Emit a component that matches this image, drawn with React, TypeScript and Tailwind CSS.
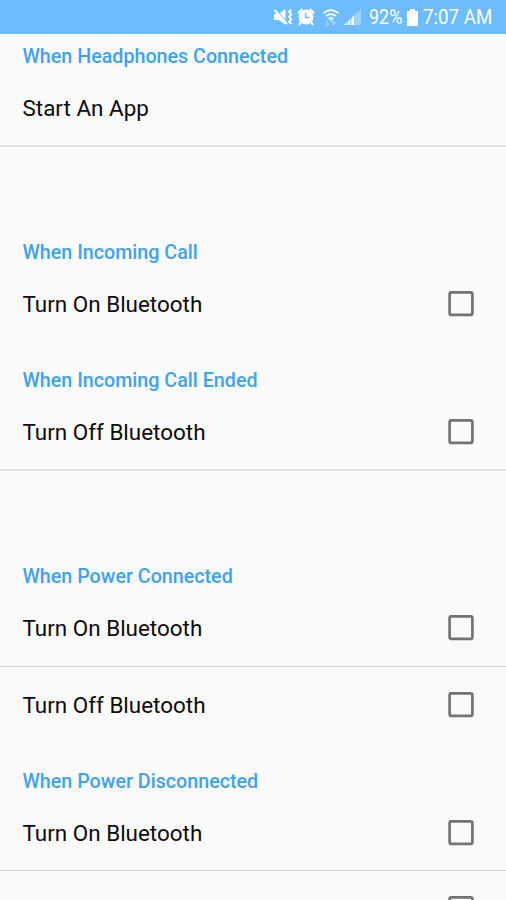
import React from "react";

function Heading({ text, className = "h-[52px]" }: { text: string; className?: string }) {
  return (
    <h2 className={`flex shrink-0 items-end pb-[2px] pl-[22.5px] text-[19.7px] leading-[23px] font-medium text-[#3fa2f0] ${className}`}>
      <span className="whitespace-nowrap">{text}</span>
    </h2>
  );
}

function Checkbox() {
  return (
    <svg className="h-[26px] w-[26px] shrink-0" viewBox="0 0 26 26" fill="none">
      <rect x="1.600" y="1.300" width="22.800" height="22.600" rx="2" stroke="#737373" strokeWidth="2.700" />
    </svg>
  );
}

function Row({ text, checkbox = true, className = "h-[76px]" }: { text?: string; checkbox?: boolean; className?: string }) {
  return (
    <div className={`flex shrink-0 items-center justify-between pr-8 pl-[22.5px] ${className}`}>
      <span className="whitespace-nowrap text-[22.45px] leading-[26px] text-[#0b0b0b]">{text}</span>
      {checkbox && <Checkbox />}
    </div>
  );
}

function MutedIcon() {
  return (
    <svg className="h-[20px] w-[20px] shrink-0" viewBox="0 0 20 20" fill="white">
      <path d="M1 7h4.500L12.500 2v15.500L5.500 13H1z" />
      <path d="M3 2.500L14.500 15" stroke="#6dbcff" strokeWidth="1" />
      <path d="M1.500 3L14 17" stroke="white" strokeWidth="1.900" />
      <path d="M18.200 2.500l-2 2.300 2 2.500-2 2.500 2 2.500-2 2.500 2 2.200" fill="none" stroke="white" strokeWidth="2" />
    </svg>
  );
}

function AlarmIcon() {
  return (
    <svg className="h-[18px] w-[18px] shrink-0" viewBox="0 0 18 18">
      <circle cx="9" cy="9" r="7.500" fill="white" />
      <path d="M1.500 4.500l3.200-3M16.500 4.500l-3.200-3M3.800 14.300l-1.500 2M14.200 14.300l1.500 2" stroke="white" strokeWidth="2" strokeLinecap="round" />
      <path d="M8.700 4.800v4.700h3.800" fill="none" stroke="#6dbcff" strokeWidth="1.500" />
    </svg>
  );
}

function WifiIcon() {
  return (
    <svg className="h-[19px] w-[18px] shrink-0" viewBox="0 0 18 19" fill="none" stroke="white">
      <path d="M1.500 5.200q7.500-6 15 0M4 8.200q5-4 10 0M6.500 10.800q2.500-2 5 0" strokeWidth="1.700" />
      <circle cx="9" cy="12" r="1" fill="white" stroke="none" />
      <path d="M5.500 12.500v5M3.800 15.500l1.700 2 1.700-2M11.500 18v-5M9.800 15l1.700-2 1.700 2" stroke="#a5d5ff" strokeWidth="1.300" />
    </svg>
  );
}

function SignalIcon() {
  return (
    <svg className="h-[18px] w-[18px] shrink-0" viewBox="0 0 18 18">
      <path d="M0 17L17 1v16z" fill="#9fd3ff" />
      <path d="M0 17l2.500-2.400V17zM4 17v-3.800l2-1.900V17zM7.500 17V9.900l2.500-2.300V17z" fill="white" />
    </svg>
  );
}

function StatusBar() {
  return (
    <header className="flex h-[34px] shrink-0 items-center bg-[#6dbcff] pl-[273px] text-[19.7px] leading-[24px] text-white">
      <MutedIcon />
      <span className="ml-[4px] flex"><AlarmIcon /></span>
      <span className="ml-[7px] flex"><WifiIcon /></span>
      <span className="ml-[4px] flex"><SignalIcon /></span>
      <span className="mt-[2px] ml-[7px] w-[34px] whitespace-nowrap"><span className="inline-block origin-left scale-x-[.91]">92%</span></span>
      <svg className="mt-[1px] ml-[4px] h-[17px] w-[11px] shrink-0" viewBox="0 0 11 17" fill="white"><path d="M3 0h5v2h3v15H0V2h3z" /></svg>
      <span className="mt-[2px] ml-[5px] whitespace-nowrap"><span className="inline-block origin-left scale-x-[.95]">7:07 AM</span></span>
    </header>
  );
}

export default function App() {
  return (
    <div className="flex h-[900px] w-[506px] flex-col overflow-hidden bg-[#fafafa] font-[Roboto,sans-serif]">
      <StatusBar />
      <main className="flex flex-1 flex-col overflow-hidden">
        <section className="mb-[67px] shrink-0">
          <Heading text="When Headphones Connected" className="h-[36px]" />
          <Row text="Start An App" checkbox={false} className="h-[77px] border-b-2 border-[#e2e2e2]" />
        </section>
        <section className="mb-[67px] shrink-0">
          <Heading text="When Incoming Call" />
          <Row text="Turn On Bluetooth" />
          <Heading text="When Incoming Call Ended" />
          <Row text="Turn Off Bluetooth" className="h-[77px] border-b-2 border-[#e2e2e2]" />
        </section>
        <section className="shrink-0">
          <Heading text="When Power Connected" />
          <Row text="Turn On Bluetooth" className="h-[77px] border-b border-[#d8d8d8]" />
          <Row text="Turn Off Bluetooth" />
          <Heading text="When Power Disconnected" />
          <Row text="Turn On Bluetooth" className="h-[76px] border-b border-[#d8d8d8]" />
          <Row />
        </section>
      </main>
    </div>
  );
}
